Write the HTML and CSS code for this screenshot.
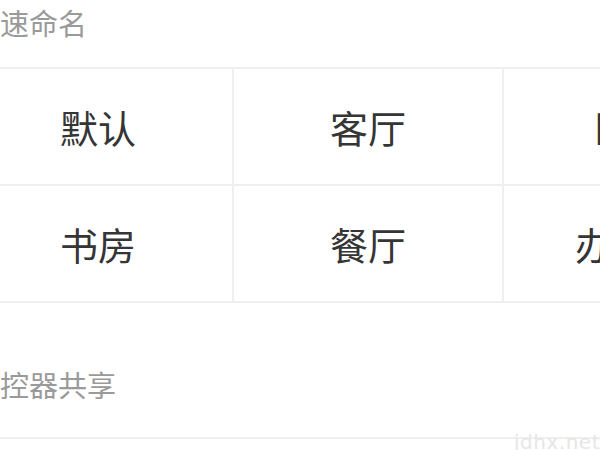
FILE: index.html
```html
<!DOCTYPE html>
<html lang="zh-CN">
<head>
<meta charset="utf-8">
<link rel="stylesheet" href="styles.css">
</head>
<body>
<div class="page">
  <div class="section-title first">快速命名</div>
  <div class="grid">
    <div class="cell">默认</div>
    <div class="cell">客厅</div>
    <div class="cell">卧室</div>
    <div class="cell">书房</div>
    <div class="cell">餐厅</div>
    <div class="cell">办公室</div>
  </div>
  <div class="section-title second">遥控器共享</div>
</div>
<div class="watermark">jdhx.net</div>
</body>
</html>
```

FILE: styles.css
```css
html, body {
  margin: 0;
  padding: 0;
  background: #ffffff;
  overflow: hidden;
  width: 600px;
  height: 450px;
}
body {
  position: relative;
  font-family: "Noto Sans CJK SC", "Noto Sans", sans-serif;
}
.page {
  margin-left: -36px;
  width: 798px;
}
.section-title {
  font-size: 29px;
  line-height: 32px;
  color: #9a9a9a;
  padding-left: 7px;
}
.section-title.first {
  padding-top: 6px;
  height: 61px;
}
.section-title.second {
  padding-top: 65px;
  padding-bottom: 37px;
  border-bottom: 2px solid #efefef;
}
.grid {
  display: grid;
  grid-template-columns: 270px 270px 258px;
  border-top: 2px solid #efefef;
}
.cell {
  height: 115px;
  display: flex;
  align-items: center;
  justify-content: center;
  font-size: 38px;
  color: #353535;
  border-right: 2px solid #efefef;
  border-bottom: 2px solid #efefef;
}
.watermark {
  position: absolute;
  right: 0;
  top: 430px;
  font-family: "DejaVu Sans", sans-serif;
  font-size: 20px;
  color: #e6e6e6;
  letter-spacing: 0.5px;
}
```
